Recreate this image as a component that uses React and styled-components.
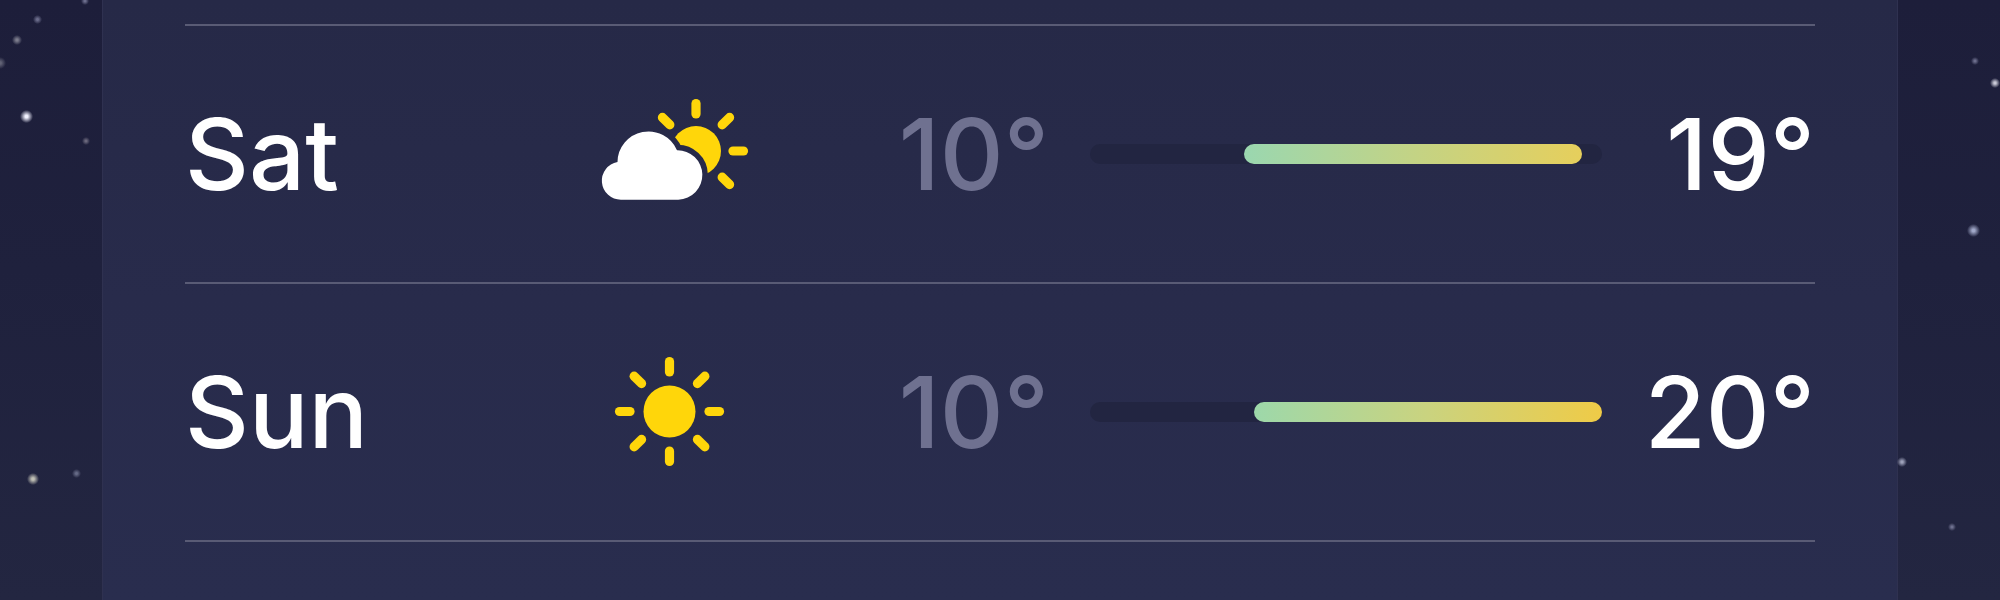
import React from "react";
import styled, { createGlobalStyle } from "styled-components";

const GlobalStyle = createGlobalStyle`
  body {
    margin: 0;
    font-family: Inter, "Liberation Sans", sans-serif;
  }
`;

const StyledSky = styled.main`
  position: relative;
  display: flex;
  box-sizing: border-box;
  min-height: 100vh;
  padding: 0 102px;
  overflow: hidden;
  background: linear-gradient(180deg, #1d1e3a 0%, #1f213d 45%, #232641 100%);
`;

const StyledStar = styled.span`
  position: absolute;
  top: ${({ $top }) => $top}px;
  ${({ $side, $inset }) => `${$side}: ${$inset}px;`}
  width: ${({ $size }) => $size}px;
  height: ${({ $size }) => $size}px;
  opacity: ${({ $glow }) => $glow};
  background: radial-gradient(
    circle closest-side,
    ${({ $color }) => $color} 20%,
    transparent 100%
  );
`;

const StyledCard = styled.section`
  position: relative;
  flex: 1;
  padding: 24px 82px 0;
  border: solid #2f3150;
  border-width: 0 1px;
  background: linear-gradient(180deg, #262947 0%, #282b4b 50%, #292d4e 100%);
`;

const StyledList = styled.ul`
  margin: 0;
  padding: 0;
  list-style: none;
  border-bottom: 2px solid #595b75;
`;

const StyledRow = styled.li`
  display: grid;
  grid-template-columns: 279fr 332fr 172fr 513fr 172fr;
  column-gap: 41px;
  align-items: center;
  height: 256px;
  border-top: 2px solid #595b75;
  color: white;
  font-size: 99px;
  font-weight: 530;
  line-height: 120px;
  white-space: nowrap;
`;

const StyledDay = styled.span`
  justify-self: start;
`;

const StyledIcon = styled.svg`
  width: 160px;
  height: 140px;
  justify-self: center;
`;

const StyledTemp = styled.span`
  justify-self: end;
  color: ${({ $muted }) => ($muted ? "#6f7190" : "white")};
`;

const StyledTrack = styled.div`
  height: 20px;
  border-radius: 10px;
  background: #222541;
`;

const StyledRange = styled.div`
  height: 100%;
  border-radius: 10px;
  background: linear-gradient(
    90deg,
    ${({ $from }) => $from},
    ${({ $middle }) => $middle},
    ${({ $to }) => $to}
  );
`;

const stars = [
  { side: "left", inset: 81, top: -3, size: 8, glow: 0.5, color: "#b9bbdd" },
  { side: "left", inset: 33, top: 15, size: 9, glow: 0.5, color: "#b9bbdd" },
  { side: "left", inset: 12, top: 35, size: 10, glow: 0.55, color: "#c9c9cf" },
  { side: "left", inset: -6, top: 57, size: 12, glow: 0.4, color: "#c9c9cf" },
  { side: "left", inset: 20, top: 110, size: 13, glow: 1, color: "#f2f2ff" },
  { side: "left", inset: 82, top: 137, size: 8, glow: 0.5, color: "#b5aebb" },
  { side: "left", inset: 27, top: 473, size: 12, glow: 0.85, color: "#dddccb" },
  { side: "left", inset: 72, top: 469, size: 9, glow: 0.45, color: "#b9c0dd" },
  { side: "right", inset: 21, top: 57, size: 8, glow: 0.5, color: "#b9bbdd" },
  { side: "right", inset: 0, top: 78, size: 10, glow: 0.9, color: "#dcdce8" },
  { side: "right", inset: 20, top: 224, size: 13, glow: 0.85, color: "#b7bfe0" },
  { side: "right", inset: 93, top: 457, size: 10, glow: 0.8, color: "#bcc0d8" },
  { side: "right", inset: 44, top: 523, size: 8, glow: 0.5, color: "#b9bbdd" },
];

const days = [
  {
    name: "Sat",
    icon: "cloudSun",
    low: 10,
    high: 19,
    start: 30,
    end: 96,
    colors: ["#9ad7b0", "#c3d385", "#e6cf5c"],
  },
  {
    name: "Sun",
    icon: "sun",
    low: 10,
    high: 20,
    start: 32,
    end: 100,
    colors: ["#9dd8aa", "#cad37f", "#efcb47"],
  },
];

const Rays = ({ angles, inner, outer }) =>
  angles.map((angle) => (
    <line
      key={angle}
      y1={-inner}
      y2={-outer}
      transform={`rotate(${angle})`}
      stroke="#ffd60a"
      strokeWidth="9.2"
      strokeLinecap="round"
    />
  ));

const SunIcon = () => (
  <StyledIcon viewBox="0 0 160 140" role="img" aria-label="Sunny">
    <g transform="translate(79.5 69.5)">
      <circle r="26" fill="#ffd60a" />
      <Rays
        angles={[0, 45, 90, 135, 180, 225, 270, 315]}
        inner={39.5}
        outer={50}
      />
    </g>
  </StyledIcon>
);

const cloudPath =
  "M31 115.7 A19 19 0 0 1 27.5 78 A31 31 0 0 1 87 66.3 A24.7 24.7 0 0 1 88.3 115.7 Z";

const CloudSunIcon = () => (
  <StyledIcon viewBox="0 0 160 140" role="img" aria-label="Partly cloudy">
    <mask id="cloud-gap" maskUnits="userSpaceOnUse" width="160" height="140">
      <rect width="160" height="140" fill="white" />
      <path d={cloudPath} fill="black" stroke="black" strokeWidth="11" />
    </mask>
    <g mask="url(#cloud-gap)">
      <circle cx="106" cy="67" r="25" fill="#ffd60a" />
    </g>
    <g transform="translate(106 67)">
      <Rays angles={[0, 45, 90, 135, 315]} inner={37} outer={47.5} />
    </g>
    <path d={cloudPath} fill="white" />
  </StyledIcon>
);

const icons = { sun: SunIcon, cloudSun: CloudSunIcon };

const DayRow = ({ name, icon, low, high, start, end, colors }) => {
  const Icon = icons[icon];
  const [from, middle, to] = colors;

  return (
    <StyledRow>
      <StyledDay>{name}</StyledDay>
      <Icon />
      <StyledTemp $muted>{low}°</StyledTemp>
      <StyledTrack>
        <StyledRange
          $from={from}
          $middle={middle}
          $to={to}
          style={{ marginLeft: `${start}%`, width: `${end - start}%` }}
        />
      </StyledTrack>
      <StyledTemp>{high}°</StyledTemp>
    </StyledRow>
  );
};

const App = () => (
  <>
    <GlobalStyle />
    <StyledSky>
      <StyledCard>
        <StyledList>
          {days.map((day) => (
            <DayRow key={day.name} {...day} />
          ))}
        </StyledList>
      </StyledCard>
      {stars.map(({ side, inset, top, size, glow, color }) => (
        <StyledStar
          key={`${side}-${inset}-${top}`}
          $side={side}
          $inset={inset}
          $top={top}
          $size={size}
          $glow={glow}
          $color={color}
        />
      ))}
    </StyledSky>
  </>
);

export default App;
